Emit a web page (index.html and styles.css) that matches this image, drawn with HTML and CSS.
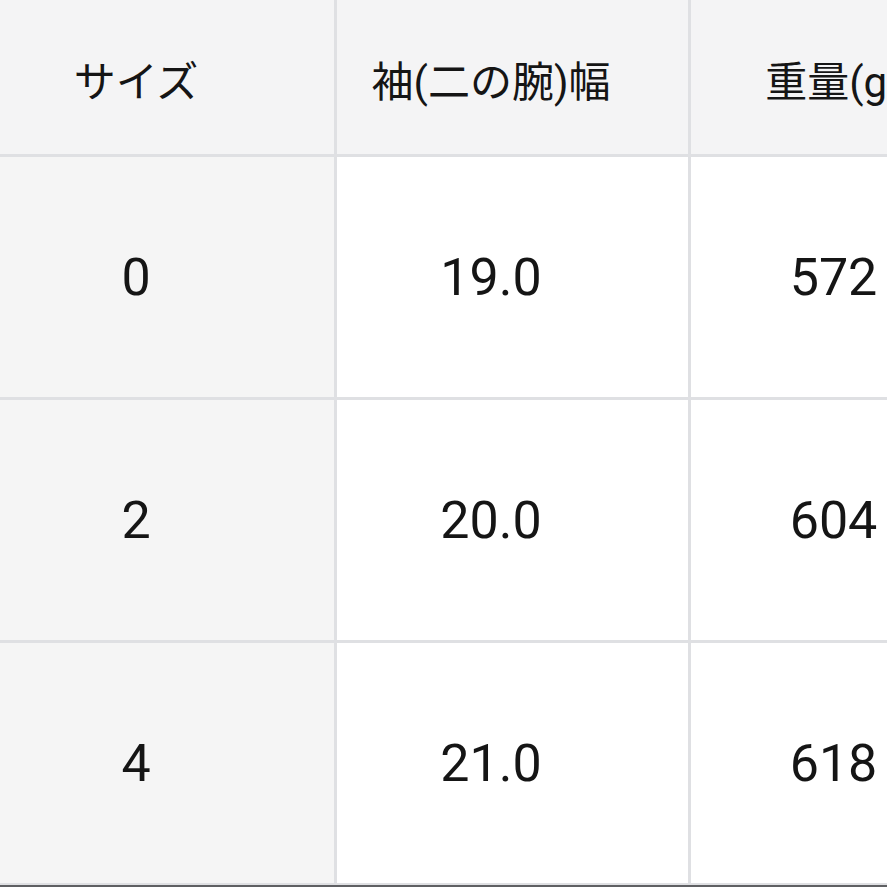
FILE: index.html
```html
<!DOCTYPE html>
<html lang="ja">
<head>
<meta charset="utf-8">
<link rel="stylesheet" href="styles.css">
</head>
<body>
<div class="frame">
  <div class="table">
    <div class="cell head">サイズ</div>
    <div class="cell head">袖(二の腕)幅</div>
    <div class="cell head last">重量(g)</div>

    <div class="cell side num">0</div>
    <div class="cell num">19.0</div>
    <div class="cell num last">572</div>

    <div class="cell side num">2</div>
    <div class="cell num">20.0</div>
    <div class="cell num last">604</div>

    <div class="cell side num">4</div>
    <div class="cell num">21.0</div>
    <div class="cell num last">618</div>
  </div>
  <div class="bottom-line"></div>
</div>
</body>
</html>
```
FILE: styles.css
```css
html, body {
  margin: 0;
  padding: 0;
  background: #ffffff;
  overflow: hidden;
}

.frame {
  width: 887px;
  height: 887px;
  overflow: hidden;
  display: flex;
  flex-direction: column;
}

.table {
  margin-left: -19px;
  width: 1035px;
  display: grid;
  grid-template-columns: 353px 351px 325px;
  grid-template-rows: 154px 240px 240px 240px;
  gap: 3px;
  padding-bottom: 2px;
  background: #dfe0e3;
  flex: none;
}

.cell {
  display: flex;
  align-items: center;
  justify-content: center;
  padding: 0 43px 0 0;
  background: #ffffff;
  color: #151515;
  font-family: Roboto, "Noto Sans CJK JP", sans-serif;
}

.cell.last {
  padding-left: 3px;
}

.head {
  background: #f4f4f5;
  font-size: 42px;
  padding-top: 2px;
}

.side {
  background: #f5f5f5;
}

.num {
  font-size: 52px;
}

.bottom-line {
  height: 3px;
  background: #5f6063;
  flex: none;
}
```
